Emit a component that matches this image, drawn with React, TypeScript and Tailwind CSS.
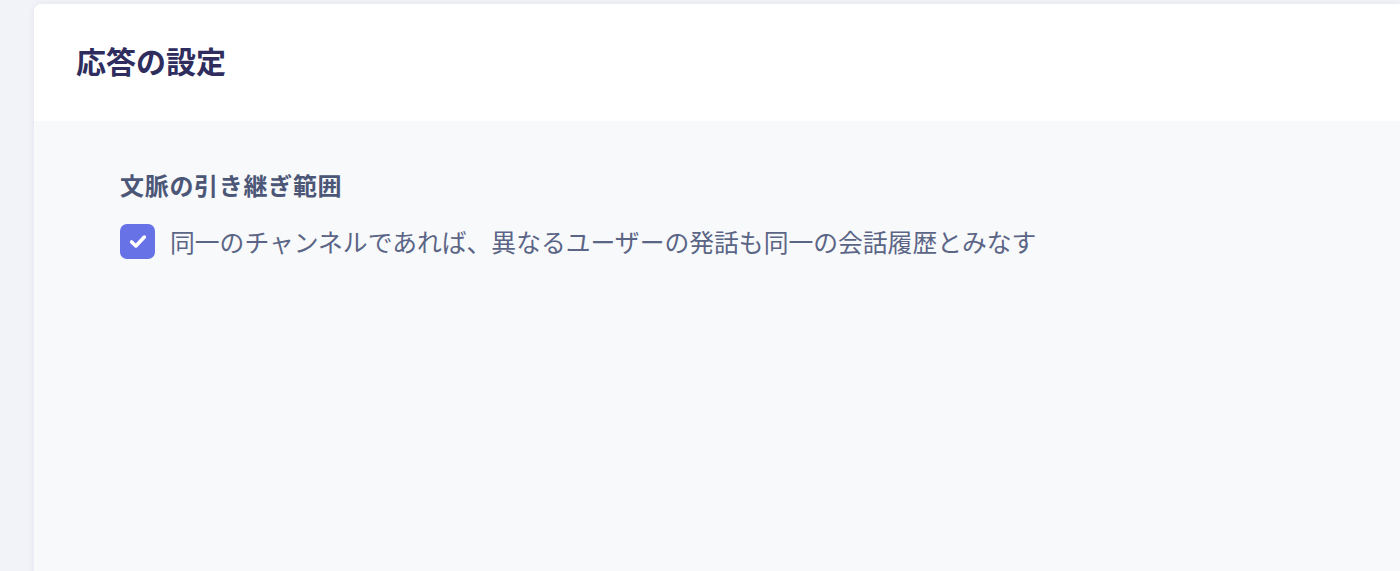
import React from "react"

export default function App() {
  const [checked, setChecked] = React.useState(true)

  return (
    <div
      className="h-[571px] w-full overflow-hidden bg-[#f2f3f8] pl-[34px] pt-[4px]"
      style={{ fontFamily: '"Noto Sans CJK JP", "Noto Sans", sans-serif' }}
    >
      <div className="flex h-[600px] flex-col overflow-hidden rounded-tl-lg bg-white shadow-[0_0_6px_rgba(30,40,90,0.08)]">
        {/* Header */}
        <div className="flex h-[117px] shrink-0 items-center bg-white pb-[5px] pl-[42px]">
          <h1 className="text-[30px] font-bold leading-none text-[#2e2d5e]">
            応答の設定
          </h1>
        </div>

        {/* Body */}
        <div className="flex-1 bg-[#f8f9fb] pl-[86px] pt-[49px]">
          <h2 className="text-[24px] font-bold leading-[30px] tracking-[0.7px] text-[#4c5777]">
            文脈の引き継ぎ範囲
          </h2>
          <label className="mt-[24px] flex cursor-pointer items-center gap-[15px]">
            <button
              type="button"
              onClick={() => setChecked(!checked)}
              className={
                checked
                  ? "flex h-[35px] w-[35px] items-center justify-center rounded-[7px] bg-[#6672e6]"
                  : "flex h-[35px] w-[35px] items-center justify-center rounded-[7px] border-2 border-[#c5cad8] bg-white"
              }
            >
              {checked && (
                <svg width="18" height="15" viewBox="0 0 17 14" fill="none">
                  <path
                    d="M2.5 7.5 L6.5 11.2 L14.5 2.8"
                    stroke="white"
                    strokeWidth="3.4"
                    strokeLinecap="round"
                    strokeLinejoin="round"
                  />
                </svg>
              )}
            </button>
            <span className="-translate-y-[1px] text-[24.8px] leading-[34px] text-[#5b6586]">
              同一のチャンネルであれば、異なるユーザーの発話も同一の会話履歴とみなす
            </span>
          </label>
        </div>
      </div>
    </div>
  )
}
